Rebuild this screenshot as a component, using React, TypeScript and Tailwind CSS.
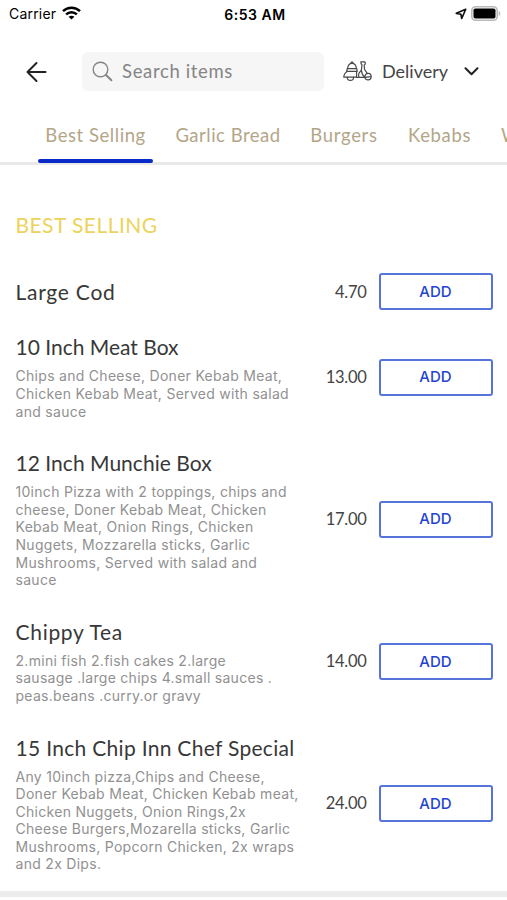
interface MenuItem {
    name: string;
    price: string;
    nameClass: string;
    description: string[];
}

const tabs = [
    { label: "Best Selling", className: "ml-[38px] w-[115px] tracking-[0.55px]", active: true },
    { label: "Garlic Bread", className: "ml-[15px] w-[120px] tracking-[0.5px]", active: false },
    { label: "Burgers", className: "ml-[14px] w-[84px] tracking-[0.7px]", active: false },
    { label: "Kebabs", className: "ml-[15px] w-[77px] tracking-[0.65px]", active: false },
    { label: "W", className: "ml-[23px] w-[17px]", active: false },
];

const items: MenuItem[] = [
    {
        name: "Large Cod",
        price: "4.70",
        nameClass: "tracking-[0.75px]",
        description: [],
    },
    {
        name: "10 Inch Meat Box",
        price: "13.00",
        nameClass: "tracking-[0px]",
        description: [
            "Chips and Cheese, Doner Kebab Meat,",
            "Chicken Kebab Meat, Served with salad",
            "and sauce",
        ],
    },
    {
        name: "12 Inch Munchie Box",
        price: "17.00",
        nameClass: "tracking-[0.03px]",
        description: [
            "10inch Pizza with 2 toppings, chips and",
            "cheese, Doner Kebab Meat, Chicken",
            "Kebab Meat, Onion Rings, Chicken",
            "Nuggets, Mozzarella sticks, Garlic",
            "Mushrooms, Served with salad and",
            "sauce",
        ],
    },
    {
        name: "Chippy Tea",
        price: "14.00",
        nameClass: "tracking-[0.7px]",
        description: [
            "2.mini fish 2.fish cakes 2.large",
            "sausage .large chips 4.small sauces .",
            "peas.beans .curry.or gravy",
        ],
    },
    {
        name: "15 Inch Chip Inn Chef Special",
        price: "24.00",
        nameClass: "tracking-[0.3px]",
        description: [
            "Any 10inch pizza,Chips and Cheese,",
            "Doner Kebab Meat, Chicken Kebab meat,",
            "Chicken Nuggets, Onion Rings,2x",
            "Cheese Burgers,Mozarella sticks, Garlic",
            "Mushrooms, Popcorn Chicken, 2x wraps",
            "and 2x Dips.",
        ],
    },
];

const WifiIcon = () => (
    <svg width="19" height="14" viewBox="0 0 19 14" fill="none" stroke="#000" strokeWidth="2.5">
        <path d="M1 5.2C5.8.6 13.2.6 18 5.2" />
        <path d="M4.1 8.4c3.1-2.9 7.7-2.9 10.8 0" />
        <path d="M9.5 13.6 6.6 10.7c1.7-1.4 4.1-1.4 5.8 0z" fill="#000" stroke="none" />
    </svg>
);

const LocationIcon = () => (
    <svg width="12" height="12" viewBox="0 0 13 13" fill="none" stroke="#111" strokeWidth="1.8" strokeLinejoin="round">
        <path d="M11.6 1.4 1.4 5.8l5 1 .9 4.6z" />
    </svg>
);

const BatteryIcon = () => (
    <svg width="30" height="15" viewBox="0 0 30 15">
        <rect x=".8" y=".8" width="25.4" height="13.4" rx="3.8" fill="#fff" stroke="#b9b9b9" strokeWidth="1.6" />
        <rect x="2.5" y="2.5" width="22" height="10" rx="1.8" fill="#000" />
        <path d="M27.7 5v5c1-.4 1.6-1.4 1.6-2.5S28.7 5.4 27.7 5z" fill="#b9b9b9" />
    </svg>
);

const BackIcon = () => (
    <svg width="22" height="22" viewBox="0 0 22 22" fill="none" stroke="#222" strokeWidth="2" strokeLinecap="round" strokeLinejoin="round">
        <path d="M19.5 11H1.5M10.5 2 1.5 11l9 9" />
    </svg>
);

const SearchIcon = () => (
    <svg width="21" height="21" viewBox="0 0 21 21" fill="none" stroke="#858585" strokeLinecap="round">
        <circle cx="8.5" cy="8.5" r="7.3" strokeWidth="1.4" />
        <path d="m14 14 5.4 5.2" strokeWidth="2" />
    </svg>
);

const ScooterIcon = () => (
    <svg width="29" height="21" viewBox="0 0 29 21" fill="none" stroke="#4a4a4a" strokeWidth="1.2" strokeLinecap="round" strokeLinejoin="round">
        {/* delivery box */}
        <path d="M4.6 7.6C4.9 4 6.6 2.4 9 2.4s4.100 1.600 4.400 5.200" />
        <path d="M8.200 2.200V1h1.600v1.200" />
        <path d="M4.200 7.700h9.600l.4 2.600H3.600z" />
        {/* rear body and wheel */}
        <path d="M4.200 10.400C2.200 11.600.8 14 .8 16.200h3.400M13.600 10.400v5.800h-3" />
        <path d="M4.200 16.200a3.200 3.200 0 1 0 6.400 0z" />
        <path d="M13.600 16.400h8.200" />
        {/* steering column and leg shield */}
        <path d="M17.800.8h4c.9 1 .6 2.600-.6 3.200l.3 4.200 2.700 4.200M17.800.8c0 1.400.3 2.400 1.200 3.200l-.6 5-2.400 3.200c-.7 1.400-.6 2.800 0 4.200" />
        <path d="M18.400 9.200c.3 3 1.400 5.600 3.400 7.200" />
        {/* front fender and wheel */}
        <path d="M21.800 16.400c0-2.600 1.500-4 3.400-4s3 1.300 3 3.200z" />
        <path d="M22 16.600a3.100 3.100 0 0 0 6.100-.6" />
    </svg>
);

const ChevronIcon = () => (
    <svg width="15" height="9" viewBox="0 0 15 9" fill="none" stroke="#222" strokeWidth="2" strokeLinecap="round" strokeLinejoin="round">
        <path d="m1.500 1.300 6 6 6-6" />
    </svg>
);

const StatusBar = () => (
    <div className="grid grid-cols-3 items-center h-7 pl-[9px] pr-[6px] font-['Inter',sans-serif] text-black">
        <div className="flex items-center gap-[6px] pb-[2px]">
            <span className="text-[14px] tracking-[0.2px]">Carrier</span>
            <WifiIcon />
        </div>
        <div className="text-center text-[14px] font-semibold tracking-[0.5px]">6:53 AM</div>
        <div className="flex items-center justify-end gap-[4px] pb-px">
            <LocationIcon />
            <BatteryIcon />
        </div>
    </div>
);

const Header = () => (
    <header className="flex items-center h-[39px] mt-6 pl-[26px] text-[#444]">
        <BackIcon />
        <div className="flex items-center gap-[9px] w-[242px] h-[39px] ml-[34px] pl-[10px] rounded-md bg-[#f6f6f6]">
            <SearchIcon />
            <span className="text-[18.5px] tracking-[0.65px] text-[#858585]">Search items</span>
        </div>
        <div className="flex items-center ml-[19px]">
            <ScooterIcon />
            <span className="w-[67px] ml-[10px] text-[18px]">Delivery</span>
            <div className="ml-[15px]">
                <ChevronIcon />
            </div>
        </div>
    </header>
);

const Tabs = () => (
    <nav className="flex h-[74px] border-b-[3px] border-[#e9e9e9] text-[18.5px] text-[#b3a688]">
        {tabs.map((tab) => (
            <div key={tab.label} className={`flex flex-col shrink-0 justify-end ${tab.className}`}>
                <span className="h-[38px] text-center leading-[28px] whitespace-nowrap">{tab.label}</span>
                <div className={`h-1 -mb-px rounded-full ${tab.active ? "bg-[#0a2bc8]" : ""}`} />
            </div>
        ))}
    </nav>
);

const MenuRow = ({ item }: { item: MenuItem }) => (
    <li className="flex items-center">
        <div className="w-[290px] shrink-0">
            <h3 className={`text-[21px] leading-[26px] whitespace-nowrap text-[#383838] ${item.nameClass}`}>{item.name}</h3>
            {item.description.length > 0 && (
                <p className="mt-[7px] font-['Inter',sans-serif] text-[14px] leading-[17.6px] tracking-[0.29px] whitespace-nowrap text-[#919191]">
                    {item.description.map((line) => (
                        <span key={line} className="block">{line}</span>
                    ))}
                </p>
            )}
        </div>
        <span className="w-[61px] text-right text-[16.5px] tracking-[-0.3px] text-[#444]">{item.price}</span>
        <button className="w-[114px] h-[37px] ml-[12px] rounded-[3px] border-2 border-[#5674da] font-['Inter',sans-serif] text-[15px] leading-[18px] font-medium text-[#2444d0]">ADD</button>
    </li>
);

const App = () => {
    return (
        <div className="w-[507px] h-[900px] overflow-hidden bg-white font-['Lato',sans-serif]">
            <StatusBar />
            <Header />
            <Tabs />
            <main className="pl-[15.5px]">
                <h2 className="mt-[46px] text-[21px] leading-[28px] tracking-[0.45px] text-[#ecd35c]">BEST SELLING</h2>
                <ul className="flex flex-col gap-[30px] mt-[34.4px] [&>li:first-child]:-mb-[6px]">
                    {items.map((item) => (
                        <MenuRow key={item.name} item={item} />
                    ))}
                </ul>
            </main>
            <div className="h-[6px] mt-[18px] bg-[#ececec]" />
        </div>
    );
};

export default App;
